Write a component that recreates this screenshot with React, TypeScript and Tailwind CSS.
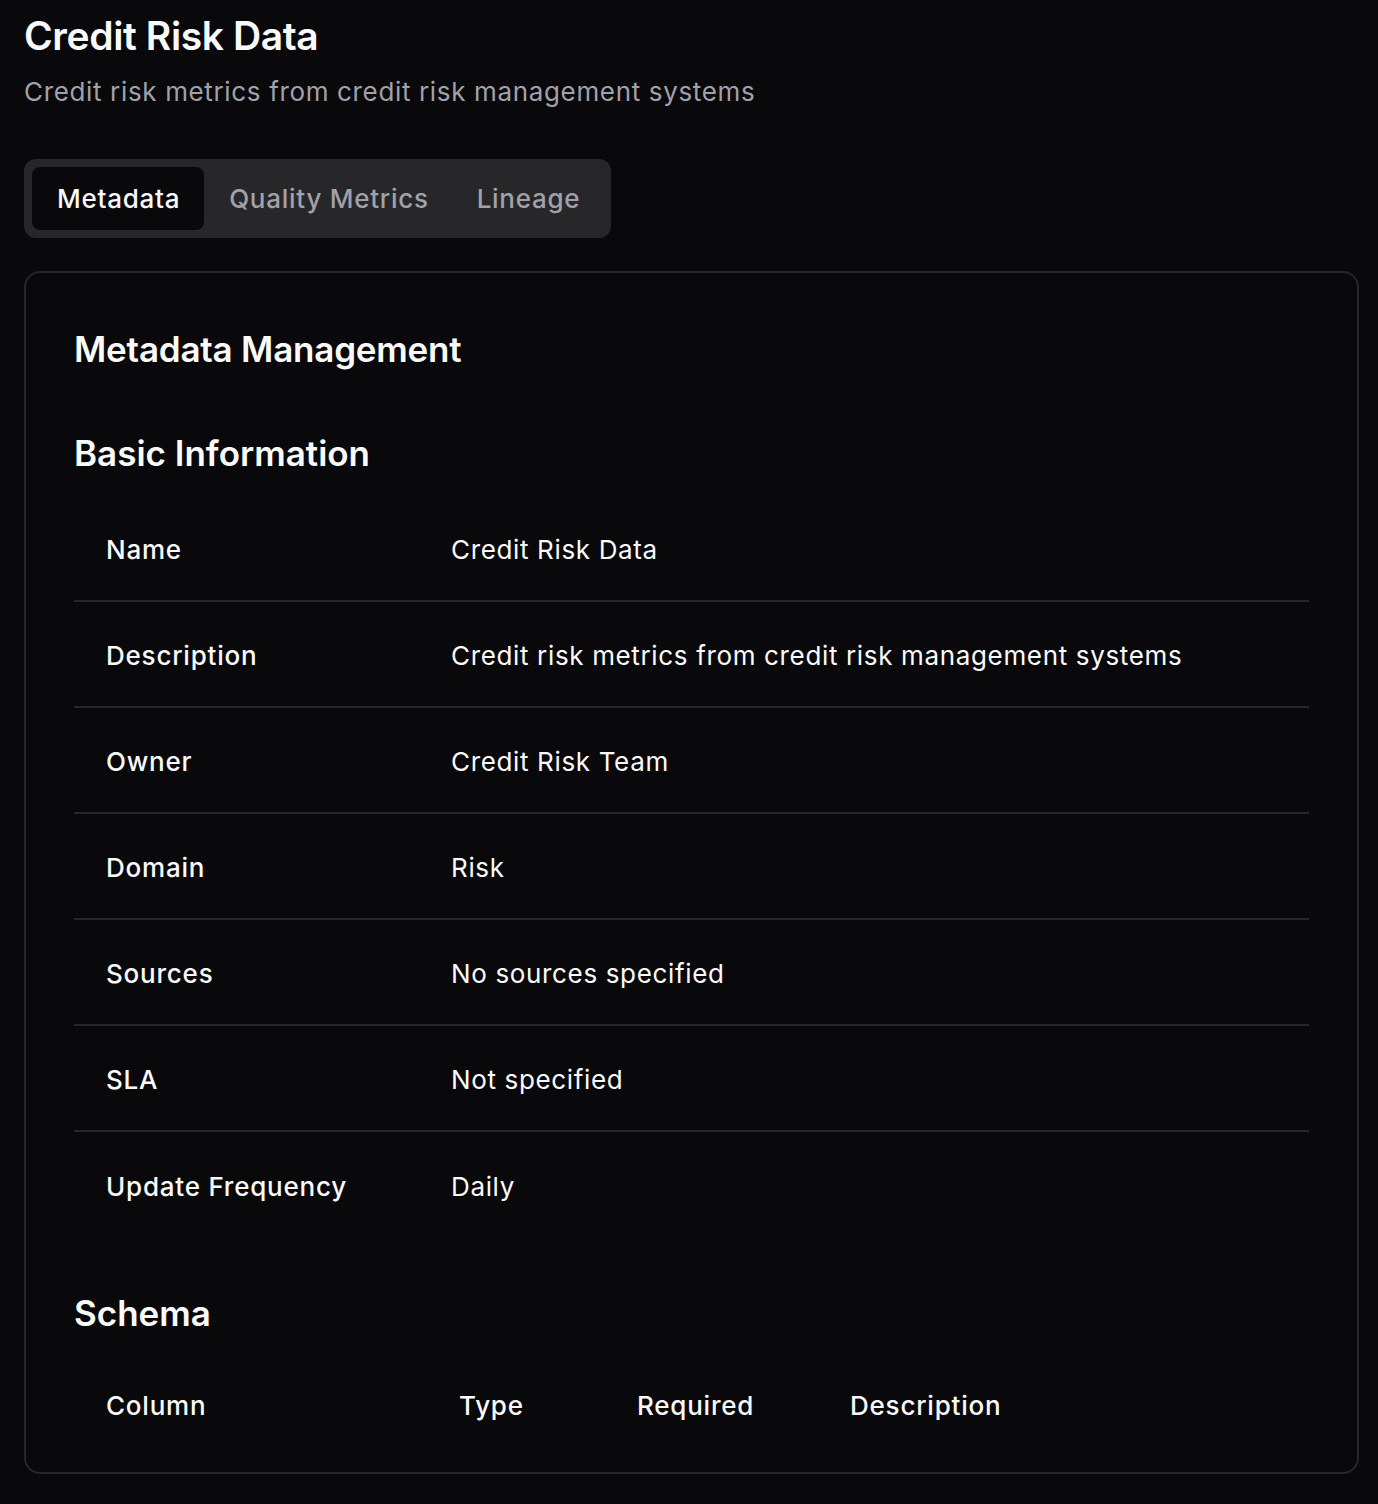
import React from 'react';

const font = { fontFamily: 'Inter, "Noto Sans", sans-serif' };

const rows: [string, string][] = [
  ['Name', 'Credit Risk Data'],
  ['Description', 'Credit risk metrics from credit risk management systems'],
  ['Owner', 'Credit Risk Team'],
  ['Domain', 'Risk'],
  ['Sources', 'No sources specified'],
  ['SLA', 'Not specified'],
  ['Update Frequency', 'Daily'],
];

const tabs = ['Metadata', 'Quality Metrics', 'Lineage'];

export default function App() {
  return (
    <div className="min-h-[1504px] w-full bg-[#09090b] text-[#fafafa] pl-[24px] pr-[19px] pt-[12px]" style={font}>
      {/* Header */}
      <h1 className="text-[39px] leading-[48px] font-semibold tracking-[-0.01em]">Credit Risk Data</h1>
      <p className="mt-[14px] text-[26px] leading-[36px] tracking-[0.025em] text-[#a1a1aa]">
        Credit risk metrics from credit risk management systems
      </p>

      {/* Tabs */}
      <div className="mt-[49px] inline-flex items-center h-[79px] p-[8px] rounded-[12px] bg-[#27272a]">
        {tabs.map((t, i) => (
          <div
            key={t}
            className={
              i === 0
                ? 'h-[63px] flex items-center pl-[25px] pr-[24px] rounded-[8px] bg-[#09090b] text-[26px] tracking-[0.028em] font-medium text-[#fafafa]'
                : 'h-[63px] flex items-center pl-[25px] pr-[23px] text-[26px] tracking-[0.028em] font-medium text-[#a1a1aa]'
            }
          >
            {t}
          </div>
        ))}
      </div>

      {/* Card */}
      <div className="mt-[33px] border-2 border-[#27272a] rounded-[16px] px-[48px] pt-[54px] pb-[27px]">
        <h2 className="text-[35px] leading-[44px] font-semibold tracking-[-0.006em]">Metadata Management</h2>

        <h3 className="mt-[60px] text-[35px] leading-[44px] font-semibold">Basic Information</h3>
        <div className="mt-[21px] flex flex-col">
          {rows.map(([k, v], i) => (
            <div
              key={k}
              className={
                i < rows.length - 1
                  ? 'h-[106px] flex items-center border-b-2 border-[#27272a] text-[26px] pt-[2px]'
                  : 'h-[106px] flex items-center text-[26px] pt-[2px]'
              }
            >
              <div className="w-[377px] pl-[32px] font-medium tracking-[0.03em]">{k}</div>
              <div className="flex-1 tracking-[0.025em]">{v}</div>
            </div>
          ))}
        </div>

        <h3 className="mt-[53px] text-[35px] leading-[44px] font-semibold">Schema</h3>
        <div className="mt-[30px] h-[80px] flex items-center text-[26px] font-medium tracking-[0.03em]">
          <div className="w-[353px] pl-[32px]">Column</div>
          <div className="w-[178px] pl-[32px]">Type</div>
          <div className="w-[213px] pl-[32px]">Required</div>
          <div className="flex-1 pl-[32px]">Description</div>
        </div>
      </div>
    </div>
  );
}
